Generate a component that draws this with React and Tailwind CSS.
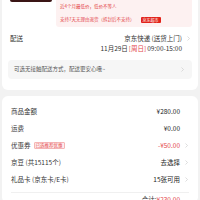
import React from 'react';

const font = { fontFamily: '"Noto Sans CJK SC", "Noto Sans", sans-serif' };

const Chevron = ({ className = '' }) => (
  <svg viewBox="0 0 6 10" className={`w-[3px] h-[5px] ${className}`} fill="none" stroke="#c8c8c8" strokeWidth="1.2">
    <path d="M1 1l4 4-4 4" />
  </svg>
);

const Row = ({ label, extra, value, valueClass = 'text-[#1a1a1a]', chevron }) => (
  <div className="flex items-center h-[17px] pl-[9px] pr-[10px]">
    <span className="text-[#333]">{label}</span>
    {extra}
    <div className="ml-auto flex items-center gap-[5px]">
      <span className={valueClass}>{value}</span>
      {chevron ? <Chevron /> : <span className="w-[3px]" />}
    </div>
  </div>
);

export default function App() {
  return (
    <div className="w-[200px] h-[200px] overflow-hidden bg-[#f2f2f2] text-[6.5px] leading-none" style={font}>
      {/* card 1 */}
      <div className="bg-white mx-[2px] rounded-b-[6px] pb-[11px]">
        <div className="flex items-start">
          <div className="w-[42px] h-[2px] shrink-0 ml-[8px] bg-[#3a1515] rounded-b-[2px]" />
          <div className="ml-[4px] mr-[6px] flex-1 bg-[#fdf1f1] rounded-b-[3px] h-[27px] pl-[4px] pt-[4px] flex flex-col gap-[8px]">
            <span className="text-[#e4474a] text-[4.5px]">近4个月最低价，低价不等人</span>
            <div className="flex items-center gap-[6px]">
              <span className="text-[#e4474a] text-[4.5px]">支持7天无理由退货（拆封后不支持）</span>
              <span className="bg-[#e2231a] text-white text-[4px] px-[2px] py-[1px] rounded-[1px]">京东超市</span>
            </div>
          </div>
        </div>
        <div className="flex pl-[8px] pr-[8px] mt-[8px]">
          <span className="text-[#333]">配送</span>
          <div className="ml-auto flex flex-col items-end gap-[3px]">
            <div className="flex items-center gap-[5px]">
              <span className="text-[#333]">京东快递 (送货上门)</span>
              <Chevron />
            </div>
            <div className="flex items-center mr-[8px] text-[#333]">
              <span>11月29日</span>
              <span className="text-[#e4474a] mx-[1px]">[周日]</span>
              <span>09:00-15:00</span>
            </div>
          </div>
        </div>
        <div className="mx-[6px] mt-[9px] h-[19px] bg-[#f6f6f6] rounded-[4px] flex items-center pl-[6px] pr-[8px]">
          <span className="text-[#555] text-[5.5px]">可选无接触配送方式，配送更安心哦~</span>
          <Chevron className="ml-auto" />
        </div>
      </div>
      {/* card 2 */}
      <div className="bg-white mx-[2px] mt-[6px] rounded-[6px] pt-[7px]">
        <Row label="商品金额" value="¥280.00" />
        <Row label="运费" value="¥0.00" />
        <Row
          label="优惠券"
          extra={<span className="ml-[3px] text-[4.5px] text-[#e4474a] bg-[#fdeeee] border border-[#f5b5b5] px-[1px] py-[0.5px] rounded-[1px]">已选推荐优惠</span>}
          value="-¥50.00"
          valueClass="text-[#e4474a]"
          chevron
        />
        <Row label="京豆 (共15115个)" value="去选择" chevron />
        <Row label="礼品卡 (京东卡/E卡)" value="15张可用" chevron />
        <div className="mx-[9px] mt-[4px] border-t border-[#f0f0f0]" />
        <div className="flex justify-end pr-[18px] pt-[3px] text-[#333]">
          <span>合计: </span>
          <span className="text-[#e4474a]">¥230.00</span>
        </div>
      </div>
    </div>
  );
}
